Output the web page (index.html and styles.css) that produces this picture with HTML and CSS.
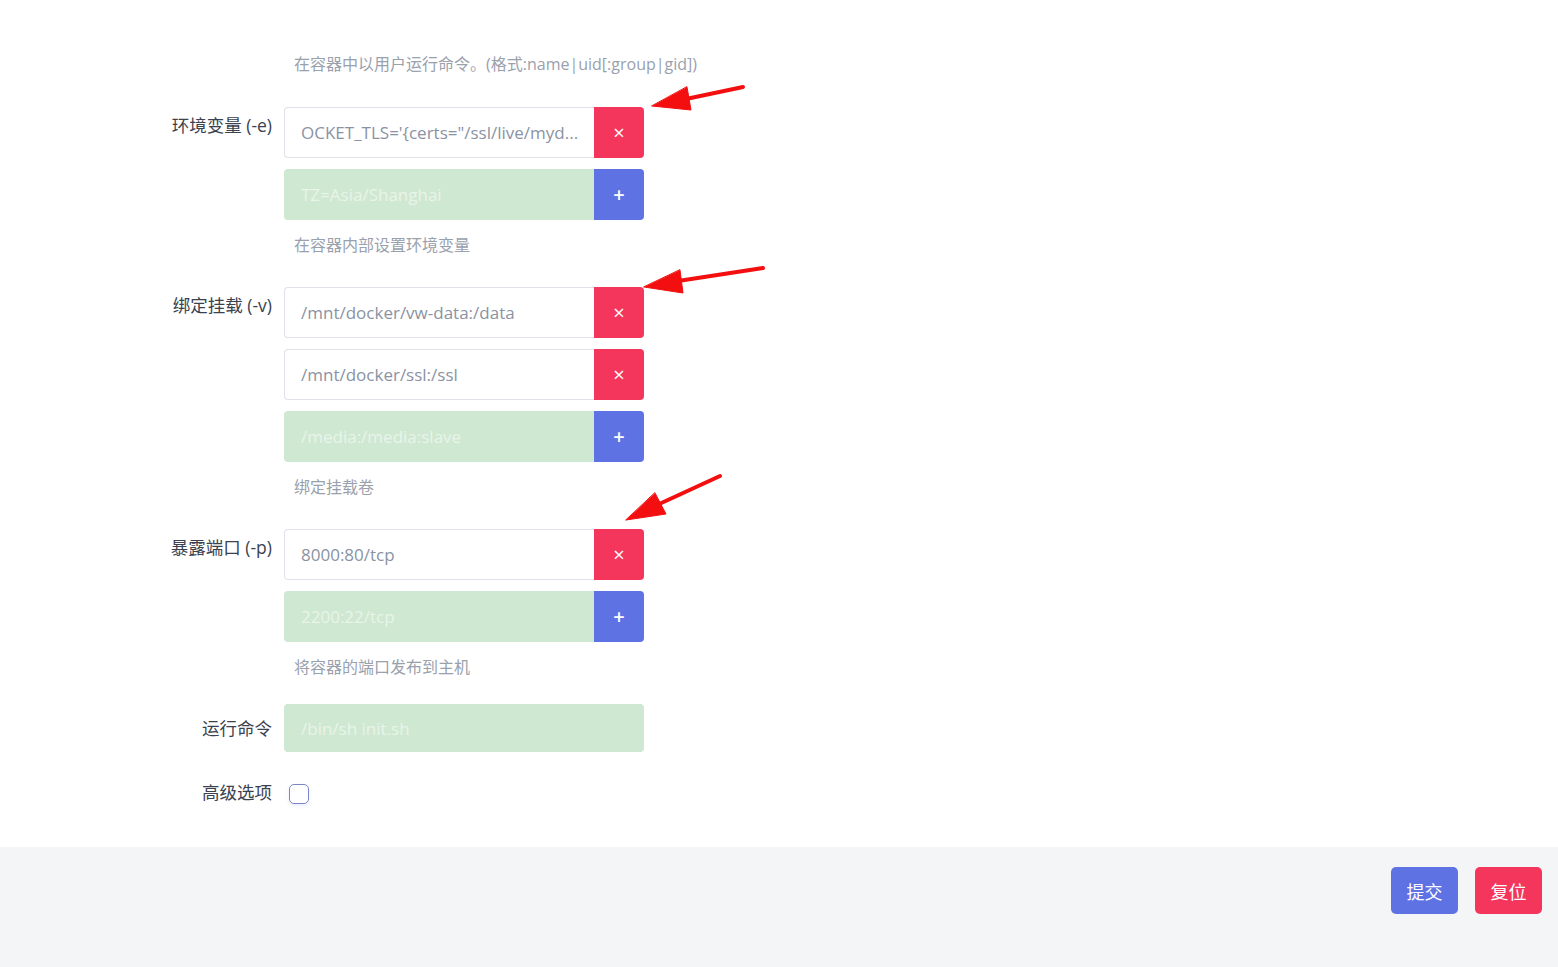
FILE: index.html
```html
<!DOCTYPE html>
<html lang="zh-CN">
<head>
    <meta charset="UTF-8">
    <meta name="viewport" content="width=device-width, initial-scale=1.0">
    <title>容器设置</title>
    <link rel="stylesheet" href="styles.css">
</head>
<body>
    <div class="form">
        <div class="row row-help">
            <div class="label"></div>
            <div class="field">
                <p class="help help-top">在容器中以用户运行命令。(格式:name|uid[:group|gid])</p>
            </div>
        </div>

        <div class="row">
            <div class="label">环境变量 (-e)</div>
            <div class="field">
                <div class="group">
                    <div class="input">OCKET_TLS='{certs="/ssl/live/myd...</div>
                    <button class="btn-del">&times;</button>
                </div>
                <div class="group">
                    <div class="input new">TZ=Asia/Shanghai</div>
                    <button class="btn-add">+</button>
                </div>
                <p class="help">在容器内部设置环境变量</p>
            </div>
        </div>

        <div class="row">
            <div class="label">绑定挂载 (-v)</div>
            <div class="field">
                <div class="group">
                    <div class="input">/mnt/docker/vw-data:/data</div>
                    <button class="btn-del">&times;</button>
                </div>
                <div class="group">
                    <div class="input">/mnt/docker/ssl:/ssl</div>
                    <button class="btn-del">&times;</button>
                </div>
                <div class="group">
                    <div class="input new">/media:/media:slave</div>
                    <button class="btn-add">+</button>
                </div>
                <p class="help">绑定挂载卷</p>
            </div>
        </div>

        <div class="row row-ports">
            <div class="label">暴露端口 (-p)</div>
            <div class="field">
                <div class="group">
                    <div class="input">8000:80/tcp</div>
                    <button class="btn-del">&times;</button>
                </div>
                <div class="group">
                    <div class="input new">2200:22/tcp</div>
                    <button class="btn-add">+</button>
                </div>
                <p class="help">将容器的端口发布到主机</p>
            </div>
        </div>

        <div class="row row-cmd">
            <div class="label">运行命令</div>
            <div class="field">
                <div class="input single new">/bin/sh init.sh</div>
            </div>
        </div>

        <div class="row row-adv">
            <div class="label">高级选项</div>
            <div class="field">
                <span class="checkbox"></span>
            </div>
        </div>
    </div>

    <div class="footer">
        <button class="btn btn-primary">提交</button>
        <button class="btn btn-danger">复位</button>
    </div>

    <!-- annotation arrows drawn over the form -->
    <svg class="arrows" width="1558" height="967" viewBox="0 0 1558 967">
        <g fill="#f30f0f" stroke="#f30f0f" stroke-linecap="round">
            <line x1="743" y1="87" x2="686" y2="99" stroke-width="4"/>
            <polygon points="652,106 691,110 687,87" stroke-width="1"/>
            <line x1="763" y1="268" x2="678" y2="281" stroke-width="4"/>
            <polygon points="644,287 683,293 680,270" stroke-width="1"/>
            <line x1="720" y1="476" x2="657" y2="505" stroke-width="4"/>
            <polygon points="626,520 666,514 655,493" stroke-width="1"/>
        </g>
    </svg>
</body>
</html>
```

FILE: styles.css
```css
body { margin: 0; background: #fff; font-family: "Open Sans", "Noto Sans CJK SC", sans-serif; color: #3a4250; }

.form { padding-top: 54px; }
.row { display: flex; margin-bottom: 32px; }
.row-help { margin-bottom: 33px; }
.row-ports { margin-bottom: 27px; }
.row-cmd { margin-bottom: 28px; align-items: center; }
.row-adv { margin-bottom: 43px; }

.label { width: 272px; box-sizing: border-box; margin-right: 12px; text-align: right; font-size: 17.5px; line-height: 24px; padding-top: 6px; white-space: nowrap; }
.row-cmd .label, .row-adv .label, .row-help .label { padding-top: 0; }

.field { width: 360px; }
.group { display: flex; height: 51px; margin-bottom: 11px; }
.group:last-of-type { margin-bottom: 0; }

.input { flex: 1; min-width: 0; box-sizing: border-box; height: 51px; padding: 0 8px 0 16px; border: 1px solid #dfe2e8; border-right: none; border-radius: 4px 0 0 4px; font-size: 17px; line-height: 49px; color: #8a93a3; white-space: nowrap; overflow: hidden; text-overflow: ellipsis; background: #fff; }
.input.new { background: #cfe8d1; border-color: #cfe8d1; color: #e9f4ea; }
.input.single { height: 48px; line-height: 48px; border-radius: 4px; }

.btn-del, .btn-add { width: 50px; height: 51px; border: none; border-radius: 0 4px 4px 0; color: #fff; font-family: "Open Sans", sans-serif; font-size: 20px; padding: 0; cursor: pointer; }
.btn-del { background: #f5365c; }
.btn-add { background: #5e72e4; font-weight: 600; }

.help { margin: 15px 0 0; padding-left: 10px; font-size: 16px; line-height: 20px; color: #99a1ad; white-space: nowrap; }
.help-top { margin-top: 0; }

.checkbox { display: block; width: 18px; height: 18px; margin: 4px 0 0 5px; border: 1px solid #7c86c6; border-radius: 5px; box-shadow: 0 2px 4px rgba(94, 114, 228, 0.12); }

.footer { background: #f4f5f7; height: 120px; box-sizing: border-box; padding: 20px 16px 0 0; display: flex; justify-content: flex-end; gap: 17px; }
.btn { width: 67px; height: 47px; border: none; border-radius: 5px; color: #fff; font-size: 18px; font-family: "Noto Sans CJK SC", sans-serif; padding: 0; cursor: pointer; }
.btn-primary { background: #5e72e4; }
.btn-danger { background: #f5365c; }

.arrows { position: absolute; left: 0; top: 0; pointer-events: none; }
```
